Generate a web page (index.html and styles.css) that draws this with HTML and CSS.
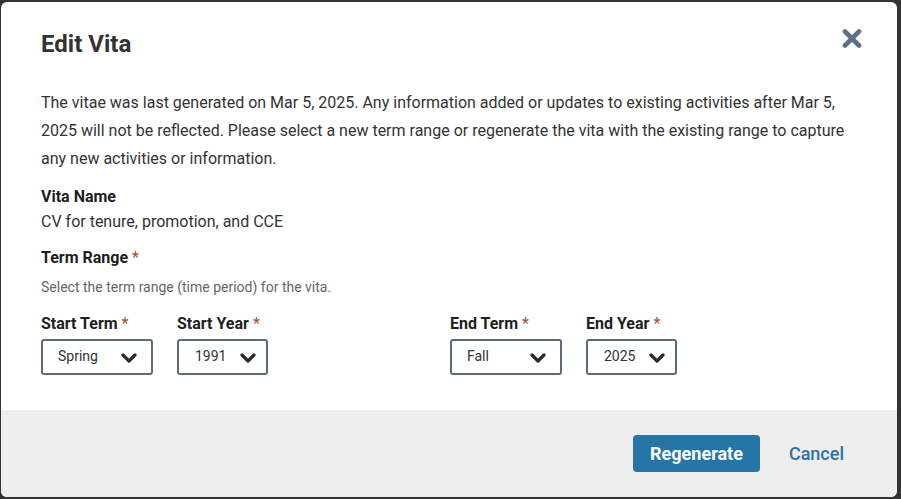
FILE: index.html
```html
<!DOCTYPE html>
<html lang="en">
<head>
<meta charset="utf-8">
<title>Edit Vita</title>
<link rel="stylesheet" href="styles.css">
</head>
<body>
<div class="dialog">
  <div class="dialog-body">
    <div class="header">
      <h1 class="title">Edit Vita</h1>
      <button class="close" aria-label="Close">
        <svg viewBox="0 0 20 19" width="20" height="19"><path d="M3 2.5 L17 16.5 M17 2.5 L3 16.5" stroke="#5f7285" stroke-width="4.6" stroke-linecap="round"/></svg>
      </button>
    </div>
    <p class="notice">The vitae was last generated on Mar 5, 2025. Any information added or updates to existing activities after Mar 5, 2025 will not be reflected. Please select a new term range or regenerate the vita with the existing range to capture any new activities or information.</p>
    <div class="field">
      <div class="label">Vita Name</div>
      <div class="value">CV for tenure, promotion, and CCE</div>
    </div>
    <div class="field term">
      <div class="label">Term Range <span class="req">*</span></div>
      <div class="hint">Select the term range (time period) for the vita.</div>
    </div>
    <div class="ranges">
      <div class="pair">
        <div class="select-group">
          <div class="label">Start Term <span class="req">*</span></div>
          <div class="select wide"><span>Spring</span><svg class="chev" viewBox="0 0 16 10" width="16" height="10"><path d="M2 2 L8 8 L14 2" fill="none" stroke="#2b2b2b" stroke-width="3.2" stroke-linecap="round" stroke-linejoin="round"/></svg></div>
        </div>
        <div class="select-group">
          <div class="label">Start Year <span class="req">*</span></div>
          <div class="select narrow"><span>1991</span><svg class="chev" viewBox="0 0 16 10" width="16" height="10"><path d="M2 2 L8 8 L14 2" fill="none" stroke="#2b2b2b" stroke-width="3.2" stroke-linecap="round" stroke-linejoin="round"/></svg></div>
        </div>
      </div>
      <div class="pair">
        <div class="select-group">
          <div class="label">End Term <span class="req">*</span></div>
          <div class="select wide"><span>Fall</span><svg class="chev" viewBox="0 0 16 10" width="16" height="10"><path d="M2 2 L8 8 L14 2" fill="none" stroke="#2b2b2b" stroke-width="3.2" stroke-linecap="round" stroke-linejoin="round"/></svg></div>
        </div>
        <div class="select-group">
          <div class="label">End Year <span class="req">*</span></div>
          <div class="select narrow"><span>2025</span><svg class="chev" viewBox="0 0 16 10" width="16" height="10"><path d="M2 2 L8 8 L14 2" fill="none" stroke="#2b2b2b" stroke-width="3.2" stroke-linecap="round" stroke-linejoin="round"/></svg></div>
        </div>
      </div>
    </div>
  </div>
  <div class="footer">
    <button class="btn-primary">Regenerate</button>
    <button class="btn-link">Cancel</button>
  </div>
</div>
</body>
</html>
```
FILE: styles.css
```css
* { box-sizing: border-box; }
html, body { margin: 0; padding: 0; }
body {
  background: #333;
  width: 901px;
  height: 499px;
  overflow: hidden;
  font-family: Roboto, "Liberation Sans", Arial, sans-serif;
  color: #333;
  padding: 2px 4px 2px 1px;
}
.dialog {
  background: #fff;
  border-radius: 6px;
  overflow: hidden;
  width: 896px;
  height: 495px;
  display: flex;
  flex-direction: column;
}
.dialog-body {
  padding: 28px 38px 0 40px;
  flex: 1;
}
.header {
  display: flex;
  justify-content: space-between;
  align-items: flex-start;
}
.title {
  margin: 0;
  font-size: 24px;
  line-height: 28px;
  font-weight: 700;
  color: #333;
}
.close {
  border: 0;
  background: none;
  padding: 0;
  margin: -1px -3px 0 0;
  width: 20px;
  height: 19px;
  cursor: pointer;
}
.close svg { display: block; }
.notice {
  margin: 31px 0 0 0;
  font-size: 16px;
  line-height: 28px;
  color: #333;
}
.field { margin-top: 12px; }
.field.term { margin-top: 11px; }
.label {
  font-size: 16px;
  line-height: 24px;
  font-weight: 700;
  color: #1e1e1e;
}
.value {
  font-size: 16px;
  line-height: 26px;
  color: #333;
}
.req { color: #a6502f; font-weight: 400; }
.hint {
  font-size: 14px;
  line-height: 20px;
  color: #666;
  margin-top: 7px;
}
.ranges {
  display: grid;
  grid-template-columns: 1fr 1fr;
  margin-top: 16px;
}
.pair {
  display: flex;
  gap: 24px;
}
.select-group .label { line-height: 22px; margin-bottom: 4px; }
.select {
  height: 36px;
  border: 2px solid #5b6b7a;
  border-radius: 3px;
  display: flex;
  align-items: center;
  justify-content: space-between;
  padding: 0 14px 0 15px;
  font-size: 14px;
  color: #333;
}
.select span { margin-top: -3px; }
.select.wide { width: 112px; }
.select.narrow { width: 91px; padding-left: 16px; padding-right: 10px; }
.chev { display: block; margin-top: 2px; }
.footer {
  background: #eee;
  height: 87px;
  display: flex;
  justify-content: flex-end;
  align-items: flex-start;
  padding: 25px 37px 0 0;
  gap: 13px;
}
.btn-primary {
  background: #2576a6;
  color: #fff;
  border: 0;
  border-radius: 4px;
  height: 37px;
  padding: 0 17px;
  font-family: inherit;
  font-size: 18px;
  font-weight: 700;
  cursor: pointer;
}
.btn-link {
  background: none;
  border: 0;
  color: #2a72a8;
  font-family: inherit;
  font-size: 18px;
  font-weight: 500;
  height: 37px;
  padding: 0 16px;
  cursor: pointer;
}
```
